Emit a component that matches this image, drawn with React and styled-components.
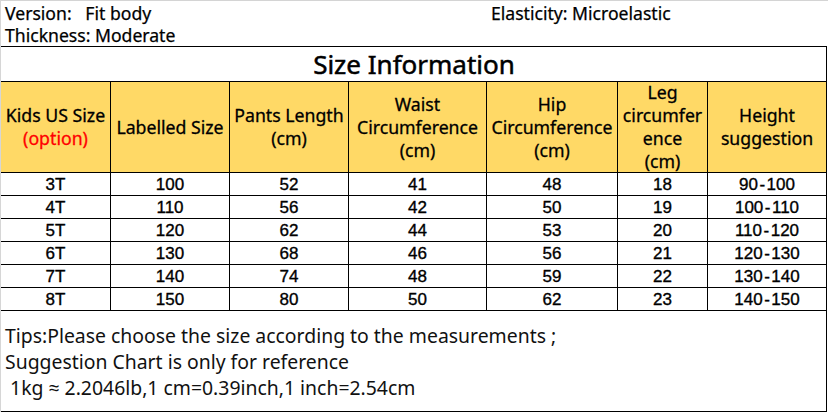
import styled, { createGlobalStyle } from "styled-components";

const GlobalStyle = createGlobalStyle`
  html, body {
    margin: 0;
    padding: 0;
    background: #fff;
  }
  body {
    font-family: "Noto Sans", "Open Sans", sans-serif;
    color: #000;
  }
`;

const columns = [
  { key: "us", label: ["Kids US Size"], option: true },
  { key: "labelled", label: ["Labelled Size"] },
  { key: "length", label: ["Pants Length", "(cm)"] },
  { key: "waist", label: ["Waist", "Circumference", "(cm)"] },
  { key: "hip", label: ["Hip", "Circumference", "(cm)"] },
  { key: "leg", label: ["Leg", "circumfer", "ence", "(cm)"] },
  { key: "height", label: ["Height", "suggestion"] },
];

const rows = [
  ["3T", "100", "52", "41", "48", "18", "90-100"],
  ["4T", "110", "56", "42", "50", "19", "100-110"],
  ["5T", "120", "62", "44", "53", "20", "110-120"],
  ["6T", "130", "68", "46", "56", "21", "120-130"],
  ["7T", "140", "74", "48", "59", "22", "130-140"],
  ["8T", "150", "80", "50", "62", "23", "140-150"],
];

// ranges like "90-100" get a slightly wider dash, as in the chart
const renderValue = (val) => {
  if (val.indexOf("-") > -1) {
    const [from, to] = val.split("-");
    return (
      <>
        {from}
        <Dash>-</Dash>
        {to}
      </>
    );
  }
  return val;
};

export default function App() {
  return (
    <Page>
      <GlobalStyle />
      <InfoBlock>
        <InfoRow>
          <InfoLeft>Version:&nbsp;&nbsp;&nbsp;Fit body</InfoLeft>
          <InfoRight>Elasticity: Microelastic</InfoRight>
        </InfoRow>
        <InfoRow>
          <InfoLeft>Thickness: Moderate</InfoLeft>
        </InfoRow>
      </InfoBlock>

      <SizeGrid>
        <TitleCell>Size Information</TitleCell>

        {columns.map((col) => (
          <HeadCell key={col.key}>
            {col.label.map((line) => (
              <span key={line}>{line}</span>
            ))}
            {col.option && <OptionText>(option)</OptionText>}
          </HeadCell>
        ))}

        {rows.map((row) =>
          row.map((val, i) => (
            <DataCell key={row[0] + i}>{renderValue(val)}</DataCell>
          ))
        )}

        <TipsCell>
          <span>Tips:Please choose the size according to the measurements ;</span>
          <span>Suggestion Chart is only for reference</span>
          <span>&nbsp;1kg ≈ 2.2046lb,1 cm=0.39inch,1 inch=2.54cm</span>
        </TipsCell>
      </SizeGrid>
    </Page>
  );
}

const Page = styled.div`
  width: 828px;
  height: 412px;
  box-sizing: border-box;
  border-left: 1px solid #d6d6d6;
  overflow: hidden;
  background: #fff;
`;

const InfoBlock = styled.div`
  height: 46px;
  box-sizing: border-box;
  border-top: 1px solid #d4d4d4;
  padding: 1px 0 0 4px;
  display: flex;
  flex-direction: column;
`;

const InfoRow = styled.div`
  display: flex;
  height: 22px;
  line-height: 22px;
  font-size: 17.6px;
  white-space: pre;
  -webkit-text-stroke: 0.25px #000;
`;

const InfoLeft = styled.div`
  width: 486px;
`;

const InfoRight = styled.div`
  flex: 1;
`;

const SizeGrid = styled.div`
  display: grid;
  grid-template-columns: 109px 118px 118px 137px 130px 89px 1fr;
  grid-template-rows: 34px 90px repeat(6, 22px) 100px;
  gap: 1px;
  background: #000;
  border-top: 1px solid #000;
  border-right: 1px solid #000;
  border-bottom: 1px solid #000;
  margin-right: 1px;
`;

const TitleCell = styled.div`
  grid-column: 1 / -1;
  background: #fff;
  display: flex;
  align-items: center;
  justify-content: center;
  font-size: 26px;
  padding-left: 1px;
  -webkit-text-stroke: 0.5px #000;
`;

const HeadCell = styled.div`
  background: #ffd966;
  display: flex;
  flex-direction: column;
  align-items: center;
  justify-content: center;
  text-align: center;
  font-size: 17.7px;
  line-height: 23px;
  white-space: nowrap;
  -webkit-text-stroke: 0.3px #000;
`;

const OptionText = styled.span`
  color: #ff0000;
  -webkit-text-stroke: 0.3px #ff0000;
`;

const DataCell = styled.div`
  background: #fff;
  display: flex;
  align-items: center;
  justify-content: center;
  padding-top: 2px;
  font-family: "Liberation Sans", Arial, sans-serif;
  font-size: 17px;
  line-height: 20px;
  -webkit-text-stroke: 0.35px #000;
`;

const Dash = styled.span`
  margin: 0 1.5px;
`;

const TipsCell = styled.div`
  grid-column: 1 / -1;
  background: #fff;
  display: flex;
  flex-direction: column;
  padding: 12px 0 0 4px;
  font-size: 19.4px;
  line-height: 26px;
  color: #111;
  white-space: pre;
`;
